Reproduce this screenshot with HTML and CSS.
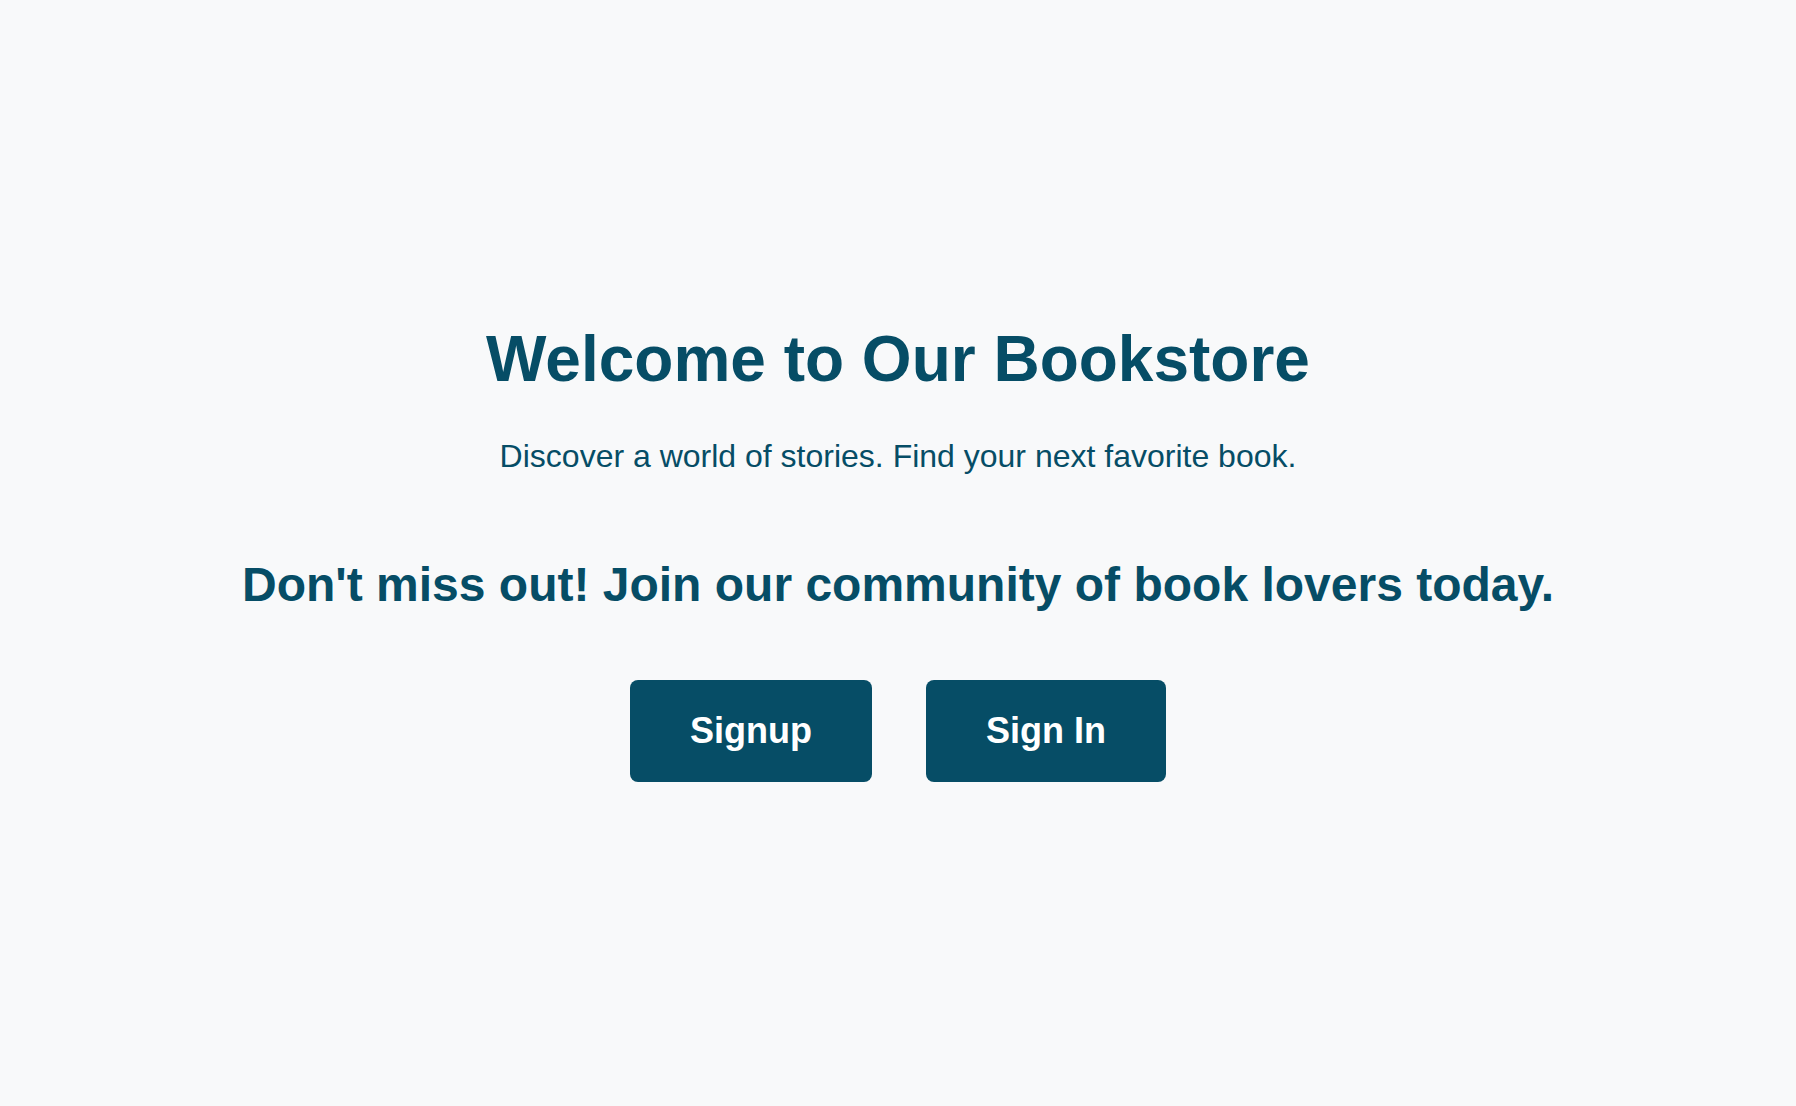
FILE: index.html
```html
<!DOCTYPE html>
<html lang="en">
<head>
<meta charset="utf-8">
<title>Bookstore</title>
<link rel="stylesheet" href="styles.css">
</head>
<body>
<main class="hero">
  <h1 class="hero-title">Welcome to Our Bookstore</h1>
  <p class="hero-subtitle">Discover a world of stories. Find your next favorite book.</p>
  <h2 class="hero-cta">Don't miss out! Join our community of book lovers today.</h2>
  <div class="actions">
    <a class="btn" href="#">Signup</a>
    <a class="btn" href="#">Sign In</a>
  </div>
</main>
</body>
</html>
```
FILE: styles.css
```css
html, body {
  margin: 0;
  padding: 0;
}
body {
  background: #f8f9fa;
  font-family: "Liberation Sans", Arial, sans-serif;
  color: #064d66;
}
.hero {
  min-height: 100vh;
  box-sizing: border-box;
  display: flex;
  flex-direction: column;
  align-items: center;
  justify-content: center;
  text-align: center;
  padding-bottom: 2px;
}
.hero-title {
  margin: 0 0 42px;
  font-size: 64px;
  font-weight: 700;
}
.hero-subtitle {
  margin: 0 0 82px;
  font-size: 32px;
}
.hero-cta {
  margin: 0 0 68px;
  font-size: 48px;
  font-weight: 700;
}
.actions {
  display: flex;
  gap: 54px;
}
.btn {
  display: block;
  background: #064d66;
  color: #ffffff;
  text-decoration: none;
  font-size: 36px;
  font-weight: 700;
  padding: 30px 60px;
  border-radius: 8px;
}
```
